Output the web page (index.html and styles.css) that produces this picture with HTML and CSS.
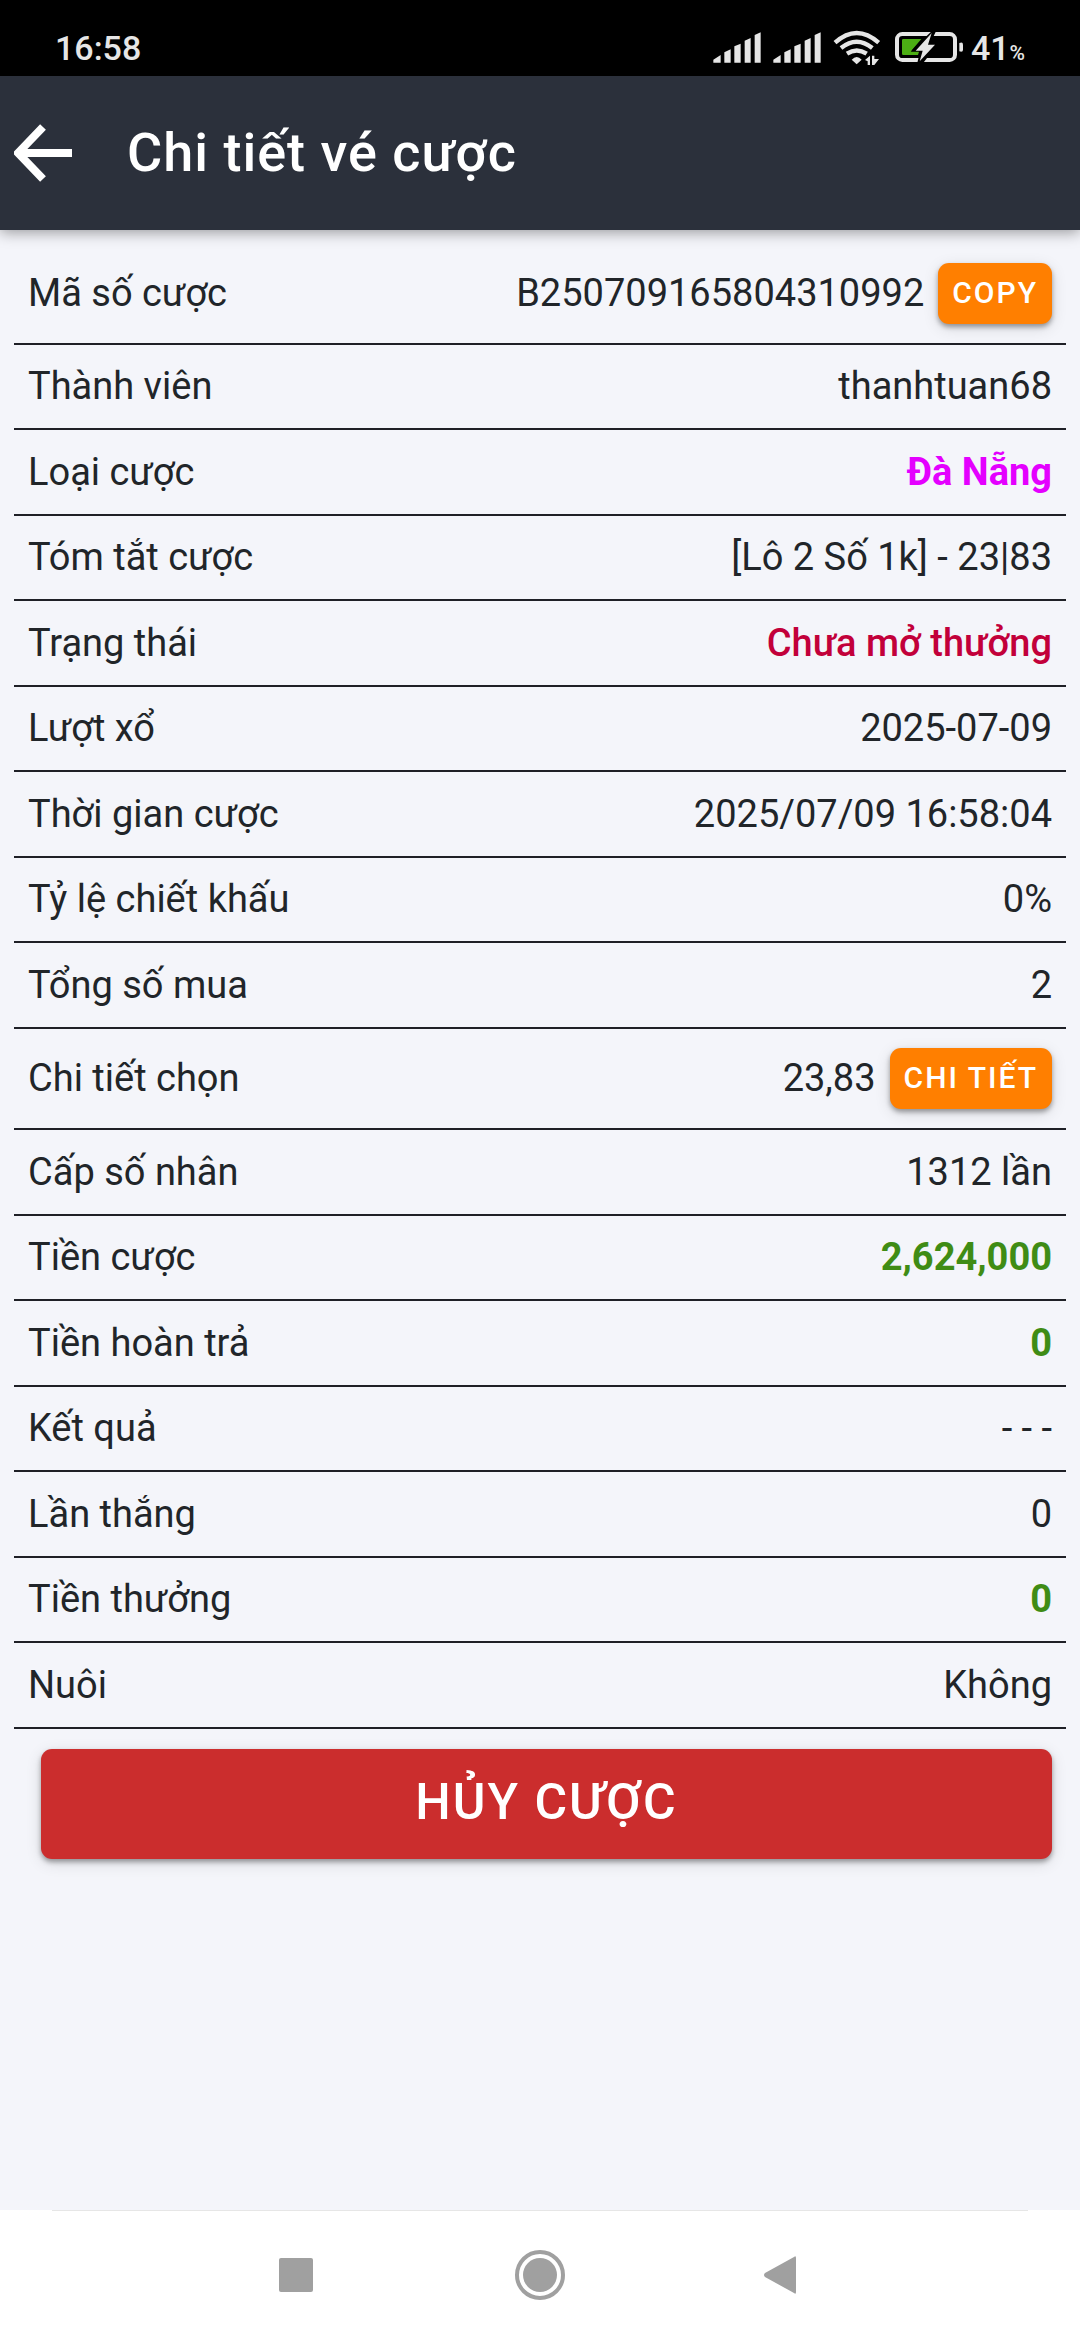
FILE: index.html
```html
<!DOCTYPE html>
<html lang="vi">
<head>
<meta charset="utf-8">
<meta name="viewport" content="width=device-width, initial-scale=1">
<title>Chi tiết vé cược</title>
<link rel="stylesheet" href="styles.css">
</head>
<body>
<div class="status-bar">
  <span class="clock">16:58</span>
  <div class="indicators">
    <svg class="signal" viewBox="66 84 150 120" aria-hidden="true"><path d="M70 188V179L92 165V188ZM103 188V157L122 148V188ZM133 188V139L152 131V188ZM164 188V122L182 114V188ZM194 188V105L212 97V188Z"/></svg>
    <svg class="signal" viewBox="66 84 150 120" aria-hidden="true"><path d="M70 188V179L92 165V188ZM103 188V157L122 148V188ZM133 188V139L152 131V188ZM164 188V122L182 114V188ZM194 188V105L212 97V188Z"/></svg>
    <svg class="wifi" viewBox="426 84 150 120" aria-hidden="true">
      <g fill="none" stroke="#e6e6e6" stroke-width="13"><path d="M435 128Q500 70 566 128"/><path d="M453 144Q500 106 547 144"/><path d="M471 161Q500 142 530 161"/></g>
      <path d="M485 179Q500 163 515 179L500 193Z"/>
      <path d="M525 180L540 167V195H533V184ZM546 167H553V177L567 177L553 195H546Z"/>
    </svg>
    <svg class="battery" viewBox="612 84 210 120" aria-hidden="true">
      <rect x="621" y="102" width="174" height="78" rx="16" fill="none" stroke="#e6e6e6" stroke-width="12"/>
      <path d="M808 129Q819 124 819 134V149Q819 158 808 154Z"/>
      <path class="charge" d="M640 117H694L664 152H688L684 165H640Q636 165 636 161V121Q636 117 640 117Z"/>
      <path class="bolt-gap" d="M725 94H738L730 110L734 129L742 134L700 188H682L690 155H662L676 140Z"/>
      <path d="M725 99L677 152H698L689 184L735 134H714Z"/>
    </svg>
    <span class="level">41<small>%</small></span>
  </div>
</div>

<header class="app-bar">
  <button class="back" type="button" aria-label="Quay lại"><svg viewBox="0 0 58 58" aria-hidden="true"><path d="M29 3L4 29L29 55M4 29H58"/></svg></button>
  <h1>Chi tiết vé cược</h1>
</header>

<main>
  <dl class="details">
    <div class="row"><dt>Mã số cược</dt><dd>B250709165804310992<button class="chip" type="button">COPY</button></dd></div>
    <div class="row"><dt>Thành viên</dt><dd>thanhtuan68</dd></div>
    <div class="row"><dt>Loại cược</dt><dd class="game">Đà Nẵng</dd></div>
    <div class="row"><dt>Tóm tắt cược</dt><dd>[Lô 2 Số 1k] - 23|83</dd></div>
    <div class="row"><dt>Trạng thái</dt><dd class="pending">Chưa mở thưởng</dd></div>
    <div class="row"><dt>Lượt xổ</dt><dd>2025-07-09</dd></div>
    <div class="row"><dt>Thời gian cược</dt><dd>2025/07/09 16:58:04</dd></div>
    <div class="row"><dt>Tỷ lệ chiết khấu</dt><dd>0%</dd></div>
    <div class="row"><dt>Tổng số mua</dt><dd>2</dd></div>
    <div class="row"><dt>Chi tiết chọn</dt><dd>23,83<button class="chip" type="button">CHI TIẾT</button></dd></div>
    <div class="row"><dt>Cấp số nhân</dt><dd>1312 lần</dd></div>
    <div class="row"><dt>Tiền cược</dt><dd class="money">2,624,000</dd></div>
    <div class="row"><dt>Tiền hoàn trả</dt><dd class="money">0</dd></div>
    <div class="row"><dt>Kết quả</dt><dd>- - -</dd></div>
    <div class="row"><dt>Lần thắng</dt><dd>0</dd></div>
    <div class="row"><dt>Tiền thưởng</dt><dd class="money">0</dd></div>
    <div class="row"><dt>Nuôi</dt><dd>Không</dd></div>
  </dl>
  <button class="cancel" type="button">HỦY CƯỢC</button>
</main>

<nav class="system-nav" aria-label="Hệ thống">
  <button type="button" aria-label="Gần đây"><svg viewBox="0 0 52 52" aria-hidden="true"><rect x="9" y="9" width="34" height="34" rx="2"/></svg></button>
  <button type="button" aria-label="Trang chủ"><svg viewBox="0 0 52 52" aria-hidden="true"><circle cx="26" cy="26" r="17"/><circle cx="26" cy="26" r="23" fill="none" stroke="#a0a0a0" stroke-width="4"/></svg></button>
  <button type="button" aria-label="Trở về"><svg viewBox="0 0 52 52" aria-hidden="true"><path d="M36 8Q38 6 38 9V43Q38 46 36 44L7 28Q5 26 7 24Z"/></svg></button>
</nav>
</body>
</html>
```
FILE: styles.css
```css
* { box-sizing: border-box; }

body {
  margin: 0;
  min-height: 100vh;
  display: flex;
  flex-direction: column;
  background: #f4f5fa;
  color: #212529;
  font-family: Roboto, "Liberation Sans", sans-serif;
  font-size: 38px;
  line-height: 45px;
}

button {
  border: 0;
  font-family: inherit;
  font-weight: 500;
  color: #fff;
  cursor: pointer;
}

svg { display: block; }

.status-bar {
  display: flex;
  justify-content: space-between;
  align-items: center;
  padding: 28px 55px 8px;
  background: #000;
  color: #e6e6e6;
  fill: #e6e6e6;
  font-size: 34px;
  font-weight: 500;
  line-height: 40px;
}

.indicators { display: flex; align-items: center; }
.signal, .wifi { width: 50px; height: 40px; margin-right: 10px; }
.battery { width: 70px; height: 40px; margin: 0 7px 0 2px; }
.charge { fill: #4caf14; }
.bolt-gap { fill: #000; }
.level small { font-size: 21px; line-height: 1; }

.app-bar {
  display: flex;
  align-items: center;
  gap: 55px;
  height: 154px;
  padding: 0 14px;
  background: #2b303b;
  color: #fff;
  box-shadow: 0 2px 14px rgba(0, 0, 0, .4);
}

.back { padding: 0; background: none; }
.back svg { width: 58px; height: 58px; fill: none; stroke: #fff; stroke-width: 8px; }

h1 {
  margin: 0;
  font-size: 54px;
  font-weight: 500;
  line-height: 64px;
  letter-spacing: 1px;
}

main { flex: 1; padding: 14px; }

.details { margin: 0; }

.row {
  display: flex;
  justify-content: space-between;
  align-items: center;
  min-height: 86px;
  padding: 18px 14px;
  border-bottom: 2px solid #1f2026;
}
.row:nth-child(even) { min-height: 85px; }
.row:has(.chip) { min-height: 101px; }

dd {
  display: flex;
  align-items: center;
  gap: 14px;
  margin: 0;
  text-align: right;
}

.game { color: #e400ff; font-weight: 700; }
.pending { color: #c2003a; font-weight: 500; }
.money { color: #3f8c15; font-weight: 700; }

.chip, .cancel {
  border-radius: 11px;
  box-shadow: 0 3px 5px rgba(0, 0, 0, .35), 0 4px 16px rgba(0, 0, 0, .12);
}

.chip {
  height: 61px;
  padding: 0 14px 3px;
  background: #ff7f00;
  font-size: 30px;
  letter-spacing: 2px;
}

.cancel {
  display: block;
  width: calc(100% - 41px);
  height: 110px;
  margin: 20px 14px 0 27px;
  padding: 0 0 4px;
  background: #cb2d2d;
  font-size: 50px;
  letter-spacing: 2px;
}

.system-nav {
  display: flex;
  justify-content: center;
  height: 130px;
  background: #fff linear-gradient(#e6e6e6, #e6e6e6) center top / calc(100% - 104px) 1px no-repeat;
}

.system-nav button {
  display: grid;
  place-items: center;
  width: 244px;
  padding: 0;
  background: none;
}

.system-nav svg { width: 52px; height: 52px; fill: #a0a0a0; }
```
